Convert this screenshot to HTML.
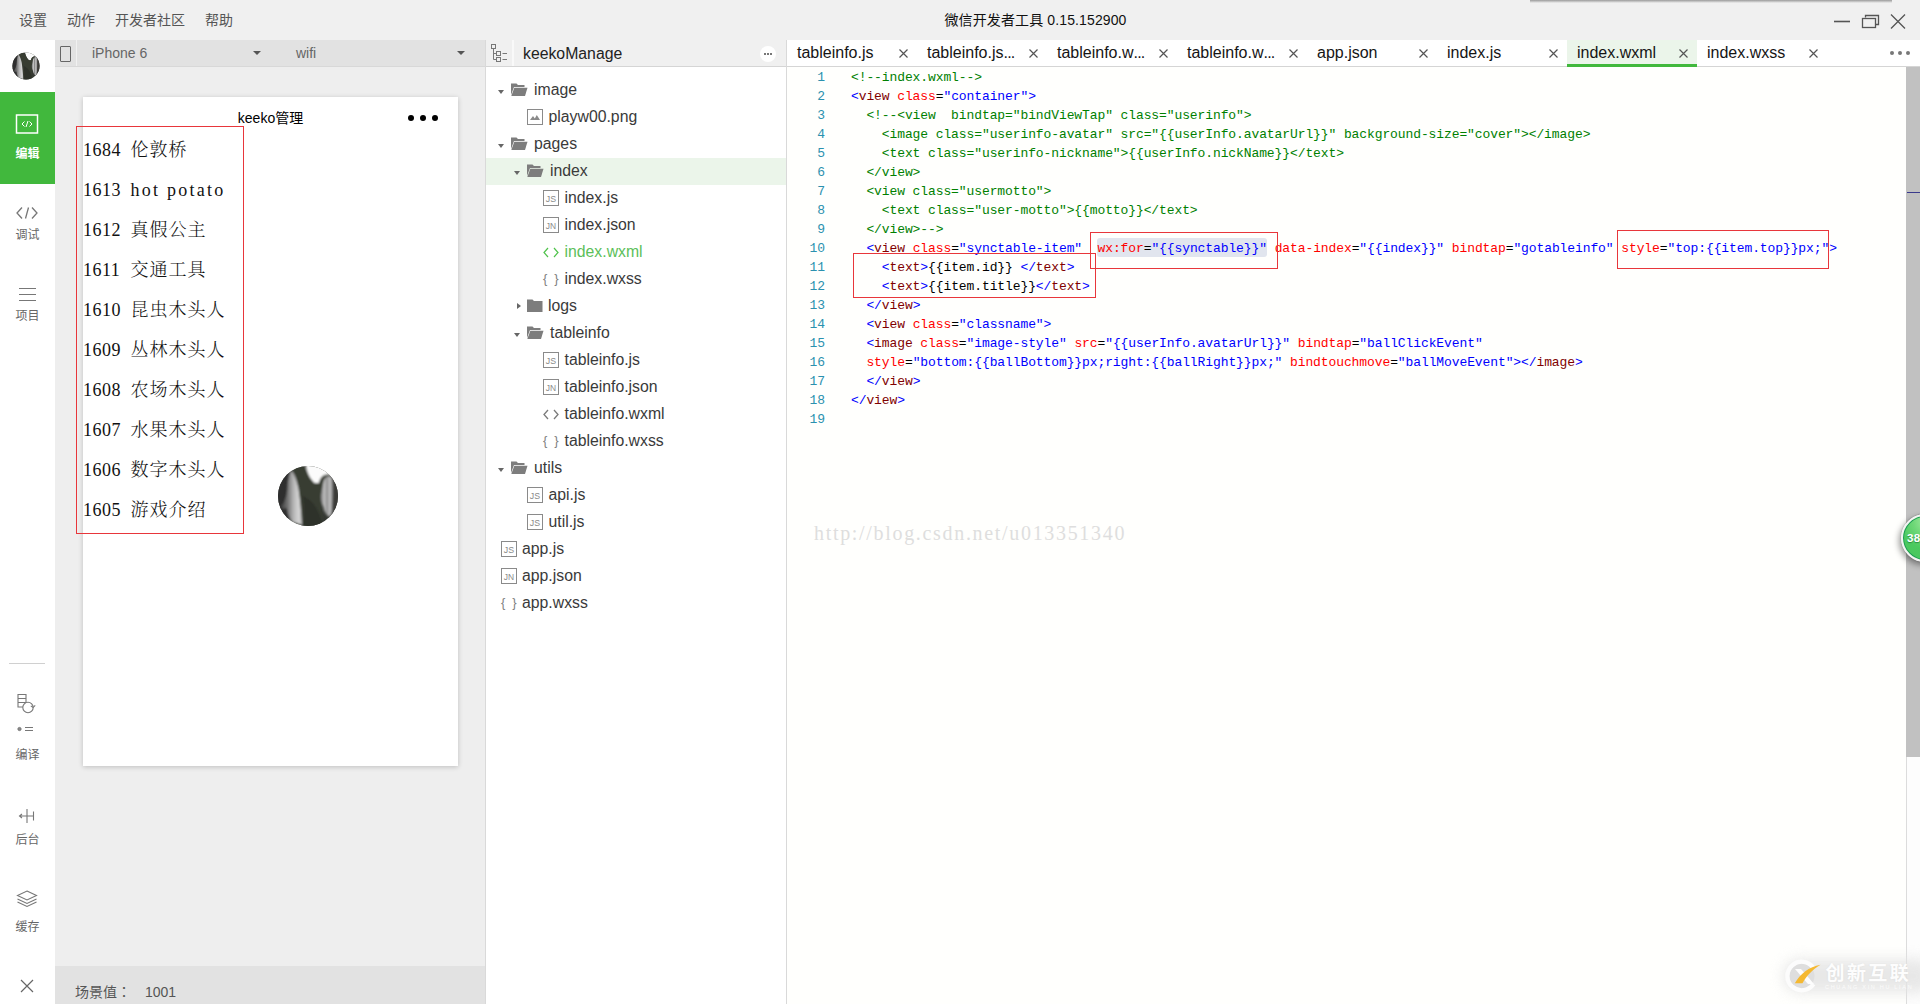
<!DOCTYPE html>
<html lang="zh">
<head>
<meta charset="utf-8">
<title>微信开发者工具 0.15.152900</title>
<style>
*{box-sizing:border-box;margin:0;padding:0}
html,body{width:1920px;height:1004px;overflow:hidden;background:#f0f0f0}
body{font-family:"Liberation Sans","Noto Sans CJK SC",sans-serif;position:relative;color:#333}
.abs{position:absolute}
/* ---------- title bar ---------- */
#titlebar{position:absolute;left:0;top:0;width:1920px;height:40px;background:#f0f0f0}
#titlebar .menu{position:absolute;top:0;height:40px;line-height:40px;font-size:14px;color:#555;white-space:nowrap}
#titlebar .title{position:absolute;left:0;width:2071px;top:0;height:40px;line-height:40px;text-align:center;font-size:14px;letter-spacing:.12px;color:#111;white-space:nowrap}
/* ---------- left sidebar ---------- */
#side{position:absolute;left:0;top:40px;width:55px;height:964px;background:#fff}
#side .lbl{position:absolute;left:0;width:55px;text-align:center;font-size:12px;color:#666;line-height:14px;white-space:nowrap}
#side .green{position:absolute;left:0;top:52px;width:55px;height:92px;background:#41b83d}
/* ---------- simulator ---------- */
#sim{position:absolute;left:55px;top:40px;width:431px;height:964px;background:#eee}
#simbar{position:absolute;left:0;top:0;width:431px;height:26px;background:#e2e2e2}
#simbar:after{content:"";position:absolute;left:20.5px;top:0;width:1.5px;height:26px;background:#f1f1f1}
#sim .sel{position:absolute;top:0;height:26px;line-height:26px;font-size:14px;color:#666;white-space:nowrap}
#sim .caret{position:absolute;top:11px;width:0;height:0;border-left:4px solid transparent;border-right:4px solid transparent;border-top:4px solid #555}
#phone{position:absolute;left:28px;top:57px;width:375px;height:669px;background:#fff;box-shadow:0 1px 5px rgba(0,0,0,.2)}
#phone .nav{position:absolute;left:0;top:0;width:375px;height:42px;line-height:42px;text-align:center;font-size:14px;color:#000}
#list{position:absolute;left:28px;top:90px;font-weight:300;font-family:"Liberation Serif","Noto Serif CJK SC",serif;font-size:18px;color:#111}
#list div{height:40px;line-height:40px;white-space:nowrap}
#list .n{display:inline-block;width:47.5px;letter-spacing:.5px}
#list .zh{letter-spacing:1px}
#list .en{letter-spacing:2.25px}
#statusbar{position:absolute;left:0;top:926px;width:431px;height:38px;background:#e2e2e2;font-size:14px;color:#555;line-height:38px}
/* ---------- tree ---------- */
#tree{position:absolute;left:485px;top:40px;width:302px;height:964px;background:#fff;border-left:1px solid #d9d9d9;border-right:1px solid #d9d9d9}
#treehead{position:absolute;left:0;top:0;width:300px;height:27px;background:#f0f0f0;border-bottom:1px solid #d5d5d5}
.trow{position:absolute;left:0;width:300px;height:27px;line-height:27px;font-size:15.8px;color:#3a3a3a;white-space:nowrap}
.trow.sel{background:#ebf5ea}
.trow span{position:absolute;top:0}
.trow i.arr{position:absolute;width:0;height:0}
/* ---------- editor ---------- */
#editor{position:absolute;left:787px;top:40px;width:1133px;height:964px;background:#fffffd}
#tabs{position:absolute;left:0;top:0;width:1133px;height:27px;background:#fff;border-bottom:1px solid #d5d5d5}
.tab{position:absolute;top:0;height:27px;width:130px;line-height:26px;font-size:16px;color:#151515;white-space:nowrap}
.tab span{position:absolute;left:10px;top:0}
.tab .dd{font-weight:normal;letter-spacing:-.8px}
.tab.act{background:#ebf5ea;border-bottom:3px solid #41b83d}
#code{position:absolute;left:0;top:28px;font-family:"Liberation Mono",monospace;font-size:13px;letter-spacing:-0.1px;line-height:19px;white-space:pre;color:#000}
.ln{position:absolute;left:0;width:38px;text-align:right;color:#2b91af}
.cl{position:absolute;left:64px}
.c{color:#008000}.b{color:#0000ff}.t{color:#800000}.a{color:#ff0000}
.rbox{position:absolute;border:1px solid #e8363b}
</style>
</head>
<body>
<svg width="0" height="0" style="position:absolute"><defs>
<filter id="blr" x="-10%" y="-10%" width="120%" height="120%"><feGaussianBlur stdDeviation="0.9"/></filter>
<linearGradient id="wfa" x1="0" x2="1"><stop offset="0" stop-color="#3c3c3c"/><stop offset=".3" stop-color="#6c6c6c"/><stop offset=".6" stop-color="#b4b4b4"/><stop offset=".85" stop-color="#d6d6d6"/><stop offset="1" stop-color="#bdbdbd"/></linearGradient>
<linearGradient id="wfb" x1="0" x2="1"><stop offset="0" stop-color="#7c7c7c"/><stop offset=".3" stop-color="#c2c2c2"/><stop offset=".5" stop-color="#8a8a8a"/><stop offset=".75" stop-color="#c8c8c8"/><stop offset="1" stop-color="#6c6c6c"/></linearGradient>
<clipPath id="ballclip"><circle cx="31" cy="31" r="30"/></clipPath>
<symbol id="ballimg" viewBox="0 0 62 62">
 <g clip-path="url(#ballclip)">
  <rect width="62" height="62" fill="#363933"/>
  <g filter="url(#blr)">
   <rect x="-2" y="-2" width="15" height="66" fill="#2f2f2f"/>
   <rect x="53" y="8" width="12" height="56" fill="#3b3a37"/>
   <path d="M28 -2H64V10L52 9.500C49 9 46 10 44 13L41.500 18.500L37 18C34 15 31 10 29.500 4Z" fill="#fbfbfb"/>
   <path d="M15 6C18 2 25 1 29 4C31 10 34 15 38 18.500L42 18C43 13 46 10 50 10L47 17C45 25 44 35 45 48L46 62H25C24 40 22 20 18 10Z" fill="#383d33"/>
   <path d="M14.500 5.500C17.500 9 20 16 21.500 24C23 34 24.500 48 25 60L15 57C12 52 10 48 10 43C7 44 5 44 3.500 42C8 38 10 30 10.500 22C11 14 12.500 8 14.500 5.500Z" fill="url(#wfa)"/>
   <path d="M51 11C53 11 55.500 13 55.800 16C56.200 26 56 38 54.700 48L52 52C49 50 47 46 46.500 42C44.500 38 43.500 34 44 30C45 24 46 18 47 15.500C48 13 49.500 11.500 51 11Z" fill="url(#wfb)"/>
   <path d="M25 30C28 40 27 52 26 62H46C44 50 40 42 34 36Z" fill="#2c2f29" opacity=".7"/>
  </g>
 </g>
</symbol></defs></svg>
<div id="titlebar">
  <div class="menu" style="left:19px">设置</div>
  <div class="menu" style="left:67px">动作</div>
  <div class="menu" style="left:115px">开发者社区</div>
  <div class="menu" style="left:205px">帮助</div>
  <div class="title">微信开发者工具 0.15.152900</div>
  <div class="abs" style="left:1530px;top:0;width:362px;height:3px;background:linear-gradient(#9a9a9a,#f0f0f0)"></div>
  <svg class="abs" style="left:1832px;top:12px" width="78" height="18" viewBox="0 0 78 18" fill="none" stroke="#555" stroke-width="1.3">
    <path d="M2 9.5H18" stroke-width="1.6"/>
    <path d="M33.5 5.5V3.5H46.5V12.5H44"/><rect x="30.500" y="6.500" width="13" height="9"/>
    <path d="M59 2.500L73 16.500M73 2.500L59 16.500"/>
  </svg>
</div>
<div id="side">
  <svg class="abs" style="left:12px;top:11.5px" width="28" height="28"><use href="#ballimg" width="28" height="28"/></svg>
  <div class="green"></div>
  <svg class="abs" style="left:15px;top:73px" width="24" height="22" viewBox="0 0 24 22" fill="none" stroke="#fff">
    <rect x="1.5" y="2" width="21" height="18" stroke-width="1.5"/>
    <path d="M9.5 8.5L7 11l2.5 2.5M14.5 8.5L17 11l-2.5 2.5M13 8l-2 6" stroke-width="1"/>
  </svg>
  <div class="lbl" style="top:107px;color:#fff;font-weight:bold">编辑</div>
  <svg class="abs" style="left:16px;top:166px" width="22" height="14" viewBox="0 0 22 14" fill="none" stroke="#777" stroke-width="1.3">
    <path d="M6 1.5L1 7l5 5.5M16 1.5L21 7l-5 5.5M12.5 1.5l-3 11"/>
  </svg>
  <div class="lbl" style="top:188px">调试</div>
  <svg class="abs" style="left:19px;top:247px" width="17" height="15" viewBox="0 0 17 15" stroke="#777" stroke-width="1"><path d="M0 1.5H17M0 7.5H17M0 13.5H17"/></svg>
  <div class="lbl" style="top:269px">项目</div>
  <div class="abs" style="left:9px;top:623px;width:36px;height:1px;background:#d0d0d0"></div>
  <svg class="abs" style="left:16px;top:653px" width="22" height="24" viewBox="0 0 22 24" fill="none" stroke="#777" stroke-width="1.1">
    <path d="M2 1.5H10V14H2ZM2 5.5H10M2 9.5H10"/><circle cx="12" cy="14.5" r="5.2" fill="#fff"/><path d="M17.2 14.5l2-2.2M17.2 14.5l-2.4-1.6"/>
  </svg>
  <svg class="abs" style="left:16px;top:684px" width="20" height="10" viewBox="0 0 20 10" fill="none" stroke="#777" stroke-width="1"><circle cx="3.5" cy="5" r="1.6" fill="#888"/><path d="M9 3.5H17M9 6.5H17"/></svg>
  <div class="lbl" style="top:707.5px">编译</div>
  <svg class="abs" style="left:18px;top:768px" width="18" height="16" viewBox="0 0 18 16" fill="none" stroke="#777" stroke-width="1.1"><path d="M9 1V15M15.5 3.5V12.5M1.5 8H9M9 8H15.5M4 6L1.5 8L4 10"/></svg>
  <div class="lbl" style="top:793px">后台</div>
  <svg class="abs" style="left:16px;top:850px" width="22" height="18" viewBox="0 0 22 18" fill="none" stroke="#777" stroke-width="1.1"><path d="M11 1L20.5 5.5L11 10L1.5 5.5ZM1.5 9L11 13.5L20.5 9M1.5 12L11 16.5L20.5 12"/></svg>
  <div class="lbl" style="top:880px">缓存</div>
  <svg class="abs" style="left:20px;top:939px" width="14" height="14" viewBox="0 0 14 14" stroke="#666" stroke-width="1.2"><path d="M1 1L13 13M13 1L1 13"/></svg>
</div>
<div id="sim">
  <div id="simbar"></div>
  <div class="abs" style="left:5px;top:6px;width:11px;height:16px;border:1px solid #666;border-radius:1px"></div>
  <div class="sel" style="left:37px">iPhone 6</div><div class="caret" style="left:198px"></div>
  <div class="sel" style="left:241px">wifi</div><div class="caret" style="left:402px"></div>
  <div class="abs" style="left:0;top:26px;width:431px;height:1px;background:#d8d8d8"></div>
  <div id="phone"><div class="nav">keeko管理</div>
    <div class="abs" style="left:325.1px;top:17.7px;width:6.4px;height:6.4px;border-radius:50%;background:#000"></div>
    <div class="abs" style="left:337.1px;top:17.7px;width:6.4px;height:6.4px;border-radius:50%;background:#000"></div>
    <div class="abs" style="left:349.1px;top:17.7px;width:6.4px;height:6.4px;border-radius:50%;background:#000"></div>
  </div>
  <div id="list">
<div><span class="n">1684</span><span class="zh">伦敦桥</span></div>
<div><span class="n">1613</span><span class="en">hot potato</span></div>
<div><span class="n">1612</span><span class="zh">真假公主</span></div>
<div><span class="n">1611</span><span class="zh">交通工具</span></div>
<div><span class="n">1610</span><span class="zh">昆虫木头人</span></div>
<div><span class="n">1609</span><span class="zh">丛林木头人</span></div>
<div><span class="n">1608</span><span class="zh">农场木头人</span></div>
<div><span class="n">1607</span><span class="zh">水果木头人</span></div>
<div><span class="n">1606</span><span class="zh">数字木头人</span></div>
<div><span class="n">1605</span><span class="zh">游戏介绍</span></div>
  </div>
  <div class="rbox" style="left:21px;top:86px;width:168px;height:408px"></div>
  <svg class="abs" style="left:222px;top:425px" width="62" height="62"><use href="#ballimg" width="62" height="62"/></svg>
  <div id="statusbar"><span class="abs" style="left:20px;top:7px">场景值<span lang="ja" style="font-family:'Liberation Sans','Noto Sans CJK JP',sans-serif;position:static">：</span></span><span class="abs" style="left:90px;top:7px">1001</span></div>
</div>
<div id="tree"><div id="treehead">
  <svg class="abs" style="left:5px;top:4px" width="17" height="18" viewBox="0 0 17 18" fill="none" stroke="#777" stroke-width="1"><rect x=".5" y=".5" width="4" height="4"/><path d="M2.5 4.5V15.5H5.5M2.5 9.5H5.5"/><rect x="5.5" y="7.5" width="4" height="4"/><rect x="5.5" y="13.5" width="4" height="4"/><path d="M11.5 9.5H16M11.5 15.5H16"/></svg>
  <div class="abs" style="left:26px;top:0;width:2px;height:26px;background:#f9f9f9"></div>
  <div class="abs" style="left:37px;top:0;line-height:28px;font-size:15.8px;color:#222">keekoManage</div>
  <div class="abs" style="left:274px;top:6px;width:16px;height:16px;border-radius:50%;background:#fff"></div>
  <div class="abs" style="left:278px;top:13px;width:2px;height:2px;background:#777;box-shadow:3px 0 #777,6px 0 #777"></div>
</div>
<div class="trow" style="top:37px"><i class="arr" style="left:12px;top:12.5px;border-left:3.5px solid transparent;border-right:3.5px solid transparent;border-top:4.5px solid #666"></i><svg class="abs" style="left:24px;top:6px" width="18" height="14" viewBox="0 0 18 14"><path d="M1 0.5H6.5L8 2H14.5V4H4L1 12Z" fill="#7d7d7d"/><path d="M4.3 4.8H17.5L15 13H1.3Z" fill="#7d7d7d"/></svg><span style="left:48px;top:-1px">image</span></div>
<div class="trow" style="top:64px"><svg class="abs" style="left:41px;top:5px" width="16" height="16" viewBox="0 0 16 16"><rect x=".5" y=".5" width="15" height="15" fill="#fff" stroke="#8a8a8a"/><path d="M3 11L6 7L7.800 9.500L9.800 6L13 11Z" fill="#8a8a8a"/></svg><span style="left:62.5px;top:-1px">playw00.png</span></div>
<div class="trow" style="top:91px"><i class="arr" style="left:12px;top:12.5px;border-left:3.5px solid transparent;border-right:3.5px solid transparent;border-top:4.5px solid #666"></i><svg class="abs" style="left:24px;top:6px" width="18" height="14" viewBox="0 0 18 14"><path d="M1 0.5H6.5L8 2H14.5V4H4L1 12Z" fill="#7d7d7d"/><path d="M4.3 4.8H17.5L15 13H1.3Z" fill="#7d7d7d"/></svg><span style="left:48px;top:-1px">pages</span></div>
<div class="trow sel" style="top:118px"><i class="arr" style="left:28px;top:12.5px;border-left:3.5px solid transparent;border-right:3.5px solid transparent;border-top:4.5px solid #666"></i><svg class="abs" style="left:40px;top:6px" width="18" height="14" viewBox="0 0 18 14"><path d="M1 0.5H6.5L8 2H14.5V4H4L1 12Z" fill="#7d7d7d"/><path d="M4.3 4.8H17.5L15 13H1.3Z" fill="#7d7d7d"/></svg><span style="left:64px;top:-1px">index</span></div>
<div class="trow" style="top:145px"><svg class="abs" style="left:57px;top:5px" width="16" height="16" viewBox="0 0 16 16"><rect x=".5" y=".5" width="15" height="15" fill="#fff" stroke="#8a8a8a"/><text x="8" y="11.600" text-anchor="middle" textLength="10.300" lengthAdjust="spacingAndGlyphs" font-family="Liberation Sans,sans-serif" font-size="9.800" fill="#8a8a8a">JS</text></svg><span style="left:78.5px;top:-1px">index.js</span></div>
<div class="trow" style="top:172px"><svg class="abs" style="left:57px;top:5px" width="16" height="16" viewBox="0 0 16 16"><rect x=".5" y=".5" width="15" height="15" fill="#fff" stroke="#8a8a8a"/><text x="8" y="11.600" text-anchor="middle" textLength="10.300" lengthAdjust="spacingAndGlyphs" font-family="Liberation Sans,sans-serif" font-size="9.800" fill="#8a8a8a">JN</text></svg><span style="left:78.5px;top:-1px">index.json</span></div>
<div class="trow" style="top:199px"><svg class="abs" style="left:57px;top:7px" width="17" height="13" viewBox="0 0 17 13" fill="none" stroke="#4fc24b" stroke-width="1.2"><path d="M5 2L1 6.500L5 11M11 2L15 6.500L11 11"/></svg><span style="left:78.5px;top:-1px;color:#5cc05a">index.wxml</span></div>
<div class="trow" style="top:226px"><span style="left:57px;font-size:13px;color:#808080;letter-spacing:7px;top:-1px">{}</span><span style="left:78.5px;top:-1px">index.wxss</span></div>
<div class="trow" style="top:253px"><i class="arr" style="left:31px;top:10px;border-top:3.5px solid transparent;border-bottom:3.5px solid transparent;border-left:4.5px solid #666"></i><svg class="abs" style="left:40px;top:6px" width="18" height="14" viewBox="0 0 18 14"><path d="M1 0.5H6.5L8 2H16.5V13H1Z" fill="#7d7d7d"/></svg><span style="left:62px;top:-1px">logs</span></div>
<div class="trow" style="top:280px"><i class="arr" style="left:28px;top:12.5px;border-left:3.5px solid transparent;border-right:3.5px solid transparent;border-top:4.5px solid #666"></i><svg class="abs" style="left:40px;top:6px" width="18" height="14" viewBox="0 0 18 14"><path d="M1 0.5H6.5L8 2H14.5V4H4L1 12Z" fill="#7d7d7d"/><path d="M4.3 4.8H17.5L15 13H1.3Z" fill="#7d7d7d"/></svg><span style="left:64px;top:-1px">tableinfo</span></div>
<div class="trow" style="top:307px"><svg class="abs" style="left:57px;top:5px" width="16" height="16" viewBox="0 0 16 16"><rect x=".5" y=".5" width="15" height="15" fill="#fff" stroke="#8a8a8a"/><text x="8" y="11.600" text-anchor="middle" textLength="10.300" lengthAdjust="spacingAndGlyphs" font-family="Liberation Sans,sans-serif" font-size="9.800" fill="#8a8a8a">JS</text></svg><span style="left:78.5px;top:-1px">tableinfo.js</span></div>
<div class="trow" style="top:334px"><svg class="abs" style="left:57px;top:5px" width="16" height="16" viewBox="0 0 16 16"><rect x=".5" y=".5" width="15" height="15" fill="#fff" stroke="#8a8a8a"/><text x="8" y="11.600" text-anchor="middle" textLength="10.300" lengthAdjust="spacingAndGlyphs" font-family="Liberation Sans,sans-serif" font-size="9.800" fill="#8a8a8a">JN</text></svg><span style="left:78.5px;top:-1px">tableinfo.json</span></div>
<div class="trow" style="top:361px"><svg class="abs" style="left:57px;top:7px" width="17" height="13" viewBox="0 0 17 13" fill="none" stroke="#7a7a7a" stroke-width="1.3"><path d="M5 2L1 6.500L5 11M11 2L15 6.500L11 11"/></svg><span style="left:78.5px;top:-1px">tableinfo.wxml</span></div>
<div class="trow" style="top:388px"><span style="left:57px;font-size:13px;color:#808080;letter-spacing:7px;top:-1px">{}</span><span style="left:78.5px;top:-1px">tableinfo.wxss</span></div>
<div class="trow" style="top:415px"><i class="arr" style="left:12px;top:12.5px;border-left:3.5px solid transparent;border-right:3.5px solid transparent;border-top:4.5px solid #666"></i><svg class="abs" style="left:24px;top:6px" width="18" height="14" viewBox="0 0 18 14"><path d="M1 0.5H6.5L8 2H14.5V4H4L1 12Z" fill="#7d7d7d"/><path d="M4.3 4.8H17.5L15 13H1.3Z" fill="#7d7d7d"/></svg><span style="left:48px;top:-1px">utils</span></div>
<div class="trow" style="top:442px"><svg class="abs" style="left:41px;top:5px" width="16" height="16" viewBox="0 0 16 16"><rect x=".5" y=".5" width="15" height="15" fill="#fff" stroke="#8a8a8a"/><text x="8" y="11.600" text-anchor="middle" textLength="10.300" lengthAdjust="spacingAndGlyphs" font-family="Liberation Sans,sans-serif" font-size="9.800" fill="#8a8a8a">JS</text></svg><span style="left:62.5px;top:-1px">api.js</span></div>
<div class="trow" style="top:469px"><svg class="abs" style="left:41px;top:5px" width="16" height="16" viewBox="0 0 16 16"><rect x=".5" y=".5" width="15" height="15" fill="#fff" stroke="#8a8a8a"/><text x="8" y="11.600" text-anchor="middle" textLength="10.300" lengthAdjust="spacingAndGlyphs" font-family="Liberation Sans,sans-serif" font-size="9.800" fill="#8a8a8a">JS</text></svg><span style="left:62.5px;top:-1px">util.js</span></div>
<div class="trow" style="top:496px"><svg class="abs" style="left:15px;top:5px" width="16" height="16" viewBox="0 0 16 16"><rect x=".5" y=".5" width="15" height="15" fill="#fff" stroke="#8a8a8a"/><text x="8" y="11.600" text-anchor="middle" textLength="10.300" lengthAdjust="spacingAndGlyphs" font-family="Liberation Sans,sans-serif" font-size="9.800" fill="#8a8a8a">JS</text></svg><span style="left:36px;top:-1px">app.js</span></div>
<div class="trow" style="top:523px"><svg class="abs" style="left:15px;top:5px" width="16" height="16" viewBox="0 0 16 16"><rect x=".5" y=".5" width="15" height="15" fill="#fff" stroke="#8a8a8a"/><text x="8" y="11.600" text-anchor="middle" textLength="10.300" lengthAdjust="spacingAndGlyphs" font-family="Liberation Sans,sans-serif" font-size="9.800" fill="#8a8a8a">JN</text></svg><span style="left:36px;top:-1px">app.json</span></div>
<div class="trow" style="top:550px"><span style="left:15px;font-size:13px;color:#808080;letter-spacing:7px;top:-1px">{}</span><span style="left:36px;top:-1px">app.wxss</span></div>
</div>
<div id="editor"><div id="tabs">
<div class="tab" style="left:0px"><span>tableinfo.js</span><svg class="abs" style="left:111.5px;top:9px" width="9" height="9" viewBox="0 0 9 9" stroke="#555" stroke-width="1.2"><path d="M.5 .5L8.5 8.5M8.5 .5L.5 8.5"/></svg></div>
<div class="tab" style="left:130px"><span>tableinfo.js<b class="dd">...</b></span><svg class="abs" style="left:111.5px;top:9px" width="9" height="9" viewBox="0 0 9 9" stroke="#555" stroke-width="1.2"><path d="M.5 .5L8.5 8.5M8.5 .5L.5 8.5"/></svg></div>
<div class="tab" style="left:260px"><span>tableinfo.w<b class="dd">...</b></span><svg class="abs" style="left:111.5px;top:9px" width="9" height="9" viewBox="0 0 9 9" stroke="#555" stroke-width="1.2"><path d="M.5 .5L8.5 8.5M8.5 .5L.5 8.5"/></svg></div>
<div class="tab" style="left:390px"><span>tableinfo.w<b class="dd">...</b></span><svg class="abs" style="left:111.5px;top:9px" width="9" height="9" viewBox="0 0 9 9" stroke="#555" stroke-width="1.2"><path d="M.5 .5L8.5 8.5M8.5 .5L.5 8.5"/></svg></div>
<div class="tab" style="left:520px"><span>app.json</span><svg class="abs" style="left:111.5px;top:9px" width="9" height="9" viewBox="0 0 9 9" stroke="#555" stroke-width="1.2"><path d="M.5 .5L8.5 8.5M8.5 .5L.5 8.5"/></svg></div>
<div class="tab" style="left:650px"><span>index.js</span><svg class="abs" style="left:111.5px;top:9px" width="9" height="9" viewBox="0 0 9 9" stroke="#555" stroke-width="1.2"><path d="M.5 .5L8.5 8.5M8.5 .5L.5 8.5"/></svg></div>
<div class="tab act" style="left:780px"><span>index.wxml</span><svg class="abs" style="left:111.5px;top:9px" width="9" height="9" viewBox="0 0 9 9" stroke="#555" stroke-width="1.2"><path d="M.5 .5L8.5 8.5M8.5 .5L.5 8.5"/></svg></div>
<div class="tab" style="left:910px"><span>index.wxss</span><svg class="abs" style="left:111.5px;top:9px" width="9" height="9" viewBox="0 0 9 9" stroke="#555" stroke-width="1.2"><path d="M.5 .5L8.5 8.5M8.5 .5L.5 8.5"/></svg></div>
<div class="abs" style="left:1103px;top:11px;width:4px;height:4px;border-radius:50%;background:#777;box-shadow:8px 0 #777,16px 0 #777"></div>
</div>
<div class="abs" style="left:310px;top:198px;width:170px;height:19px;background:#e1e5ee;border-radius:3px"></div>
<div id="code">
<div class="ln" style="top:0px">1</div><div class="cl" style="top:0px"><span class="c">&lt;!--index.wxml--&gt;</span></div>
<div class="ln" style="top:19px">2</div><div class="cl" style="top:19px"><span class="b">&lt;</span><span class="t">view</span> <span class="a">class</span>=<span class="b">"container"</span><span class="b">&gt;</span></div>
<div class="ln" style="top:38px">3</div><div class="cl" style="top:38px">  <span class="c">&lt;!--&lt;view  bindtap="bindViewTap" class="userinfo"&gt;</span></div>
<div class="ln" style="top:57px">4</div><div class="cl" style="top:57px">  <span class="c">  &lt;image class="userinfo-avatar" src="{{userInfo.avatarUrl}}" background-size="cover"&gt;&lt;/image&gt;</span></div>
<div class="ln" style="top:76px">5</div><div class="cl" style="top:76px">  <span class="c">  &lt;text class="userinfo-nickname"&gt;{{userInfo.nickName}}&lt;/text&gt;</span></div>
<div class="ln" style="top:95px">6</div><div class="cl" style="top:95px">  <span class="c">&lt;/view&gt;</span></div>
<div class="ln" style="top:114px">7</div><div class="cl" style="top:114px">  <span class="c">&lt;view class="usermotto"&gt;</span></div>
<div class="ln" style="top:133px">8</div><div class="cl" style="top:133px">  <span class="c">  &lt;text class="user-motto"&gt;{{motto}}&lt;/text&gt;</span></div>
<div class="ln" style="top:152px">9</div><div class="cl" style="top:152px">  <span class="c">&lt;/view&gt;--&gt;</span></div>
<div class="ln" style="top:171px">10</div><div class="cl" style="top:171px">  <span class="b">&lt;</span><span class="t">view</span> <span class="a">class</span>=<span class="b">"synctable-item"</span>  <span class="a">wx:for</span>=<span class="b">"{{synctable}}"</span> <span class="a">data-index</span>=<span class="b">"{{index}}"</span> <span class="a">bindtap</span>=<span class="b">"gotableinfo"</span> <span class="a">style</span>=<span class="b">"top:{{item.top}}px;"</span><span class="b">&gt;</span></div>
<div class="ln" style="top:190px">11</div><div class="cl" style="top:190px">    <span class="b">&lt;</span><span class="t">text</span><span class="b">&gt;</span>{{item.id}} <span class="b">&lt;/</span><span class="t">text</span><span class="b">&gt;</span></div>
<div class="ln" style="top:209px">12</div><div class="cl" style="top:209px">    <span class="b">&lt;</span><span class="t">text</span><span class="b">&gt;</span>{{item.title}}<span class="b">&lt;/</span><span class="t">text</span><span class="b">&gt;</span></div>
<div class="ln" style="top:228px">13</div><div class="cl" style="top:228px">  <span class="b">&lt;/</span><span class="t">view</span><span class="b">&gt;</span></div>
<div class="ln" style="top:247px">14</div><div class="cl" style="top:247px">  <span class="b">&lt;</span><span class="t">view</span> <span class="a">class</span>=<span class="b">"classname"</span><span class="b">&gt;</span></div>
<div class="ln" style="top:266px">15</div><div class="cl" style="top:266px">  <span class="b">&lt;</span><span class="t">image</span> <span class="a">class</span>=<span class="b">"image-style"</span> <span class="a">src</span>=<span class="b">"{{userInfo.avatarUrl}}"</span> <span class="a">bindtap</span>=<span class="b">"ballClickEvent"</span></div>
<div class="ln" style="top:285px">16</div><div class="cl" style="top:285px">  <span class="a">style</span>=<span class="b">"bottom:{{ballBottom}}px;right:{{ballRight}}px;"</span> <span class="a">bindtouchmove</span>=<span class="b">"ballMoveEvent"</span><span class="b">&gt;</span><span class="b">&lt;/</span><span class="t">image</span><span class="b">&gt;</span></div>
<div class="ln" style="top:304px">17</div><div class="cl" style="top:304px">  <span class="b">&lt;/</span><span class="t">view</span><span class="b">&gt;</span></div>
<div class="ln" style="top:323px">18</div><div class="cl" style="top:323px"><span class="b">&lt;/</span><span class="t">view</span><span class="b">&gt;</span></div>
<div class="ln" style="top:342px">19</div><div class="cl" style="top:342px"></div>
</div>
<div class="rbox" style="left:303px;top:192px;width:188px;height:37px"></div>
<div class="rbox" style="left:66px;top:213px;width:243px;height:45px"></div>
<div class="rbox" style="left:830px;top:190px;width:212px;height:39px"></div>
<div class="abs" style="left:27px;top:481px;line-height:24px;font-family:'Liberation Serif','Noto Serif CJK SC',serif;font-size:20px;letter-spacing:1.68px;color:#dedede;white-space:nowrap">http://blog.csdn.net/u013351340</div>
<div class="abs" style="left:1119px;top:27px;width:14px;height:937px;background:#fdfdfd;border-left:1px solid #dcdcdc"></div>
<div class="abs" style="left:1119px;top:27px;width:14px;height:690px;background:#c1c1c1"></div>
<div class="abs" style="left:1120px;top:151.5px;width:13px;height:1.3px;background:#3a3a8c"></div>
<div class="abs" style="left:1113.5px;top:474px;width:48px;height:48px;border-radius:50%;background:radial-gradient(circle at 55% 12%,#a4eba2 0,#6fd878 30%,#4bc95f 60%,#47c65c 100%);border:2.5px solid #f3f3f3;box-shadow:inset 0 0 0 1px #1b9a55,-2px 3px 6px rgba(0,0,0,.4),0 0 1px rgba(0,0,0,.6)"></div>
<div class="abs" style="left:1120px;top:490.5px;font-size:11.5px;font-weight:bold;color:#fff;line-height:14px;letter-spacing:.3px;text-shadow:0 1px 1px rgba(0,90,30,.5)">38</div>
<div class="abs" style="left:996px;top:919px;width:150px;height:34px;border-radius:17px;background:#e4e4e4;filter:blur(7px);opacity:.85"></div>
<svg class="abs" style="left:995px;top:915.500px" width="40" height="40" viewBox="0 0 40 40">
  <circle cx="20" cy="20" r="12.500" fill="#dedede"/>
  <path d="M31.500 12A14.300 14.300 0 1 0 31.500 28" fill="none" stroke="#fcfcfc" stroke-width="4.300"/>
  <path d="M13 13H19L32 28H26Z" fill="#fdfdfd"/>
  <path d="M12.800 27.300C18 18 27 11 38.500 8.800C30 14 24.500 20 20.500 27.300Z" fill="#f5b932"/>
</svg>
<div class="abs" style="left:1038.500px;top:922px;font-size:19px;font-weight:bold;color:#fdfdfd;letter-spacing:2.400px;line-height:24px;white-space:nowrap;text-shadow:0 0 2px rgba(0,0,0,.06)">创新互联</div>
<div class="abs" style="left:1038px;top:943.500px;font-size:5.500px;color:#fbfbfb;letter-spacing:1.700px;line-height:7px;white-space:nowrap">CHUANG XIN HU LIAN</div>
</div>
</body>
</html>
